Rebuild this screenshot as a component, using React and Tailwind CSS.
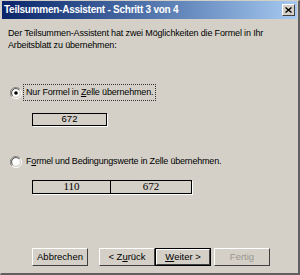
import React from "react";

function Radio({ checked }) {
  return (
    <svg width="12" height="12" viewBox="0 0 12 12" className="shrink-0">
      <path d="M10 2.5 A5 5 0 0 0 1.5 9.5" fill="none" stroke="#808080" strokeWidth="1" />
      <path d="M9 3.2 A3.8 3.8 0 0 0 2.6 8.6" fill="none" stroke="#404040" strokeWidth="1" />
      <path d="M2 9.8 A5 5 0 0 0 10.2 2.6" fill="none" stroke="#ffffff" strokeWidth="1" />
      <circle cx="6" cy="6" r="3.7" fill="#ffffff" />
      {checked && <circle cx="6" cy="6" r="1.8" fill="#000000" />}
    </svg>
  );
}

function Btn({ children, def, disabled }) {
  return (
    <div
      className={
        "w-[56px] h-[18px] flex items-center justify-center text-[9.5px] " +
        (def ? "border border-black " : "") +
        (disabled ? "text-[#9a978f]" : "text-black")
      }
    >
      <div className="w-full h-full flex items-center justify-center border-t border-l border-white border-r border-b border-r-[#404040] border-b-[#404040]">
        {children}
      </div>
    </div>
  );
}

export default function App() {
  return (
    <div
      className="w-[300px] h-[275px] bg-[#d4d0c8] flex flex-col border-l border-t border-[#d4d0c8] border-r-2 border-b-2 border-r-[#606060] border-b-[#606060] overflow-hidden"
      style={{ fontFamily: '"Liberation Sans", Arial, sans-serif' }}
    >
      <div className="h-[18px] mx-[1px] flex items-center justify-between pl-[2px] pr-[2px] bg-gradient-to-r from-[#0a246a] to-[#a6caf0]">
        <span className="text-white font-bold text-[10px] leading-none tracking-[-0.25px] whitespace-nowrap">
          Teilsummen-Assistent - Schritt 3 von 4
        </span>
        <div className="w-[13px] h-[12px] bg-[#d4d0c8] border-t border-l border-white border-r border-b border-r-[#404040] border-b-[#404040] flex items-center justify-center shrink-0">
          <svg width="7" height="6" viewBox="0 0 7 6">
            <path d="M0.5 0.5 L6.5 5.5 M6.5 0.5 L0.5 5.5" stroke="#000" strokeWidth="1.4" />
          </svg>
        </div>
      </div>

      <div className="pl-[7px] pt-[8px] text-[9px] leading-[12px] tracking-[-0.15px] text-black whitespace-nowrap">
        Der Teilsummen-Assistent hat zwei Möglichkeiten die Formel in Ihr
        <br />
        Arbeitsblatt zu übernehmen:
      </div>

      <div className="mt-[33px] ml-[9px] flex items-center gap-[1px]">
        <Radio checked />
        <div className="border border-dotted border-[#333] px-[2px] h-[17px] flex items-center text-[9px] tracking-[-0.15px] text-black whitespace-nowrap">
          Nur Formel in&nbsp;<span className="underline">Z</span>elle übernehmen.
        </div>
      </div>

      <div className="mt-[12px] ml-[31px] w-[75px] h-[13px] border border-black flex items-center justify-center text-[9.5px] text-black shadow-[1px_1px_0_#ffffff]">
        672
      </div>

      <div className="mt-[29px] ml-[9px] flex items-center gap-[2px]">
        <Radio />
        <div className="px-[2px] text-[9px] tracking-[-0.2px] text-black whitespace-nowrap">
          F<span className="underline">o</span>rmel und Bedingungswerte in Zelle übernehmen.
        </div>
      </div>

      <div
        className="mt-[11px] ml-[31px] w-[160px] h-[14px] flex border border-black shadow-[1px_1px_0_#ffffff] text-[11px] text-black"
        style={{ fontFamily: '"Liberation Serif", "Times New Roman", serif' }}
      >
        <div className="w-[78px] border-r border-black flex items-center justify-center">110</div>
        <div className="flex-1 flex items-center justify-center">672</div>
      </div>

      <div className="mt-auto mb-[7px] ml-[31px] flex">
        <Btn>Abbrechen</Btn>
        <div className="w-[11px]" />
        <Btn>
          &lt; Z<span className="underline">u</span>rück
        </Btn>
        <Btn def>
          <span className="underline">W</span>eiter &gt;
        </Btn>
        <div className="w-[3px]" />
        <Btn disabled>Fertig</Btn>
      </div>
    </div>
  );
}
